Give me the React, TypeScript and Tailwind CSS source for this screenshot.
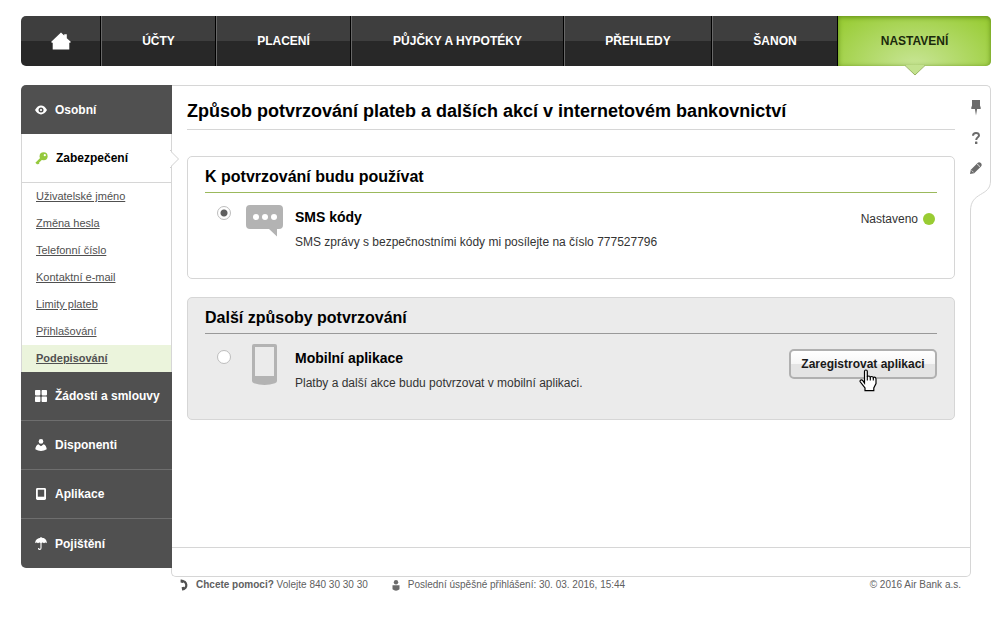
import type { ReactNode } from "react";

const NAV_ITEMS = ["Účty", "Placení", "Půjčky a hypotéky", "Přehledy", "Šanon"];

const SECURITY_LINKS = [
  "Uživatelské jméno",
  "Změna hesla",
  "Telefonní číslo",
  "Kontaktní e-mail",
  "Limity plateb",
  "Přihlašování",
  "Podepisování",
];

const HomeIcon = () => (
  <svg width="20" height="18" viewBox="0 0 20 18" fill="white">
    <path d="M10 .5 13.2 3.6V2.2h2.6v4L20 10l-1 .8h-.7V17.500H1.700V10.800H1L0 10z" />
  </svg>
);

const EyeIcon = () => (
  <svg width="12" height="12" viewBox="0 0 12 12">
    <path d="M0 6Q2.600 1.600 6 1.600T12 6Q9.400 10.400 6 10.400T0 6Z" fill="white" />
    <circle cx="6" cy="6" r="2.500" fill="#505050" />
    <circle cx="6" cy="6" r="1.100" fill="white" />
  </svg>
);

const KeyIcon = () => (
  <svg width="13" height="13" viewBox="0 0 13 13">
    <path d="M1.300 11.700 6.800 6.200" stroke="#95c93d" strokeWidth="2.600" />
    <path d="M2.600 10.400 4 11.800" stroke="#95c93d" strokeWidth="1.300" />
    <circle cx="8.600" cy="4.300" r="4" fill="#95c93d" />
    <circle cx="9.800" cy="3.200" r="1.100" fill="white" />
  </svg>
);

const GridIcon = () => (
  <svg width="12" height="12" viewBox="0 0 12 12" fill="white">
    <rect width="5.400" height="5.400" rx=".8" />
    <rect x="6.600" width="5.400" height="5.400" rx=".8" />
    <rect y="6.600" width="5.400" height="5.400" rx=".8" />
    <rect x="6.600" y="6.600" width="5.400" height="5.400" rx=".8" />
  </svg>
);

const PersonIcon = () => (
  <svg width="12" height="12" viewBox="0 0 12 12" fill="white">
    <circle cx="6" cy="2.400" r="2.300" />
    <path d="M3.300 5.200 6 7.200 8.700 5.200Q11.500 6.600 11.700 10.300 9 12 6 12T.3 10.300Q.5 6.600 3.300 5.200Z" />
  </svg>
);

const DeviceIcon = () => (
  <svg width="12" height="12" viewBox="0 0 12 12">
    <rect x="1" width="10" height="12" rx="1.400" fill="white" />
    <rect x="2.800" y="1.700" width="6.400" height="7" fill="#505050" />
  </svg>
);

const UmbrellaIcon = () => (
  <svg width="12" height="13" viewBox="0 0 12 13">
    <path d="M0 6.200Q.6 1 6 .8T12 6.200Q10.500 4.900 9 6.200 7.500 4.900 6 6.200 4.500 4.900 3 6.200 1.500 4.900 0 6.200Z" fill="white" />
    <path d="M6 0v11q0 1.400-1.300 1.400T3.600 11" fill="none" stroke="white" strokeWidth="1.100" />
  </svg>
);

const PinIcon = () => (
  <svg width="10" height="16" viewBox="0 0 10 16" fill="#6b6b6b">
    <path d="M1 0h8v5.500L9.700 7.500v1.400H6.100L5 15.500 3.900 8.900H.3V7.500L1 5.500z" />
  </svg>
);

const HelpIcon = () => (
  <svg width="10" height="12" viewBox="0 0 10 12">
    <path d="M2 3.700Q2.100 1.100 5 1.100T8 3.500C8 5.400 5.200 5.300 5.200 8" fill="none" stroke="#6b6b6b" strokeWidth="2" />
    <rect x="4" y="9.600" width="2.400" height="2.400" rx=".5" fill="#6b6b6b" />
  </svg>
);

const PencilIcon = () => (
  <svg width="12" height="12" viewBox="0 0 12 12">
    <path d="M0 12 .8 7.800 7.600 1Q9-.3 10.900 1.100 12.400 2.900 11 4.400L4.200 11.200z" fill="#6b6b6b" />
    <path d="M7 2.400Q9.200 2.600 9.600 5M1.600 8.400 3.600 10.400" fill="none" stroke="white" strokeWidth=".7" />
  </svg>
);

const SmsIcon = () => (
  <svg width="38" height="32" viewBox="0 0 38 32">
    <path d="M4 0H33Q37 0 37 4V20Q37 24 33 24H31V31.500L23 24H4Q0 24 0 20V4Q0 0 4 0Z" fill="#b3b3b3" />
    <circle cx="10" cy="12" r="3" fill="white" />
    <circle cx="19" cy="12" r="3" fill="white" />
    <circle cx="28" cy="12" r="3" fill="white" />
  </svg>
);

const PhoneIcon = () => (
  <svg width="26" height="41" viewBox="0 0 26 41">
    <path d="M2 0H23Q25 0 25 2V37Q25 38.500 23 39.200 18 41 12.500 41T2 39.200Q0 38.500 0 37V2Q0 0 2 0Z" fill="#b3b3b3" />
    <rect x="3" y="3" width="19" height="29" fill="#ebebeb" />
  </svg>
);

const HandsetIcon = () => (
  <svg width="8" height="12" viewBox="0 0 8 12">
    <path d="M1 1.800C7.800 2 7.800 9.800 2.600 10.200" fill="none" stroke="#505050" strokeWidth="2.200" />
    <path d="M.6.400 3.600 1 3 4 .6 3.400zM1.600 8.200 4 7.800 4.600 11 2.200 11.600z" fill="#505050" />
  </svg>
);

const UserIcon = () => (
  <svg width="8" height="11" viewBox="0 0 8 11" fill="#6b6b6b">
    <circle cx="4" cy="2.300" r="2.200" />
    <path d="M.5 5.200H7.500V9.300Q6 10.700 4 10.700T.5 9.300Z" />
  </svg>
);

const HandCursor = () => (
  <svg className="pointer-events-none absolute left-[70px] top-[20px]" width="18" height="23" viewBox="0 0 18 23">
    <path
      d="M5.500 14V2.500q0-1.500 1.400-1.500T8.300 2.500V8q.3-1 1.500-1t1.500 1.300q.3-.8 1.500-.8t1.500 1.300q.3-.6 1.300-.6T17 9.800V14.500L14.800 19V21.700H6V19L1.200 12.800Q.7 11.500 1.800 11t2.200.8z"
      fill="white"
      stroke="black"
      strokeWidth="1.200"
    />
    <path d="M8.300 7.500v4M11.300 8.500v3M14.300 9v2.500" stroke="black" strokeWidth="1.100" />
  </svg>
);

function SideItem({ icon, label, last }: { icon: ReactNode; label: string; last?: boolean }) {
  return (
    <a
      href="#"
      className={`flex h-[49px] items-center gap-2 bg-[#505050] pl-[14px] text-[12px] font-bold text-white ${
        last ? "" : "border-b border-[#6e6e6e]"
      }`}
    >
      {icon}
      {label}
    </a>
  );
}

type MethodProps = {
  id: string;
  heading: string;
  title: string;
  text: string;
  icon: ReactNode;
  action: ReactNode;
  active?: boolean;
};

function Method({ id, heading, title, text, icon, action, active }: MethodProps) {
  return (
    <section
      className={`min-h-[123px] rounded-[5px] border border-[#d6d6d6] px-[17px] ${active ? "bg-white" : "bg-[#ebebeb]"}`}
    >
      <h2
        className={`border-b pb-[5px] pt-[10px] text-[16px] leading-[20px] font-bold ${
          active ? "border-[#9bb95c]" : "border-[#999999]"
        }`}
      >
        {heading}
      </h2>
      <div className="flex">
        <input
          id={id}
          type="radio"
          name="method"
          defaultChecked={active}
          className={`ml-3 size-[14px] shrink-0 appearance-none rounded-full border border-[#bdbdbd] bg-white checked:bg-[radial-gradient(circle,#606060_3px,white_4px)] ${
            active ? "mt-[13px]" : "mt-4"
          }`}
        />
        <span className={`ml-[13px] flex w-[43px] shrink-0 justify-center pr-[2px] ${active ? "mt-3" : "mt-[10px]"}`}>
          {icon}
        </span>
        <div className="mt-[15px] ml-2 grow">
          <label htmlFor={id} className="block text-[14px] leading-[18px] font-bold">
            {title}
          </label>
          <p className="mt-2 text-[12px] leading-[16px] text-[#333333]">{text}</p>
        </div>
        {action}
      </div>
    </section>
  );
}

export default function App() {
  return (
    <div className="bg-white px-4 pt-4 pl-[21px] font-['Liberation_Sans',Arial,sans-serif] text-black">
      {/* Main navigation */}
      <nav className="grid h-[50px] grid-cols-[80fr_115fr_135fr_213fr_148fr_126fr_153fr] text-[12px] font-bold uppercase text-white">
        <a
          href="#"
          aria-label="Domů"
          className="flex items-center justify-center rounded-l-[5px] border-r border-black bg-[linear-gradient(#3e3e3e_50%,#282828_50%)]"
        >
          <HomeIcon />
        </a>
        {NAV_ITEMS.map((item) => (
          <a
            key={item}
            href="#"
            className="flex items-center justify-center border-r border-l border-r-black border-l-[#686868] bg-[linear-gradient(#3e3e3e_50%,#282828_50%)]"
          >
            {item}
          </a>
        ))}
        <a
          href="#"
          className="relative flex items-center justify-center rounded-r-[5px] bg-[radial-gradient(ellipse_at_bottom,#c8e596_0%,#9acd38_90%)] text-[#1b2a0c] shadow-[inset_0_1px_5px_#5f8a14]"
        >
          Nastavení
          <svg className="absolute top-[49px] left-1/2 -translate-x-1/2" width="20" height="11" viewBox="0 0 20 11">
            <path d="M0 0H20L10 10Z" fill="#c3e28e" />
            <path d="M0 .5 10 10 20 .5" fill="none" stroke="#96b35e" />
          </svg>
        </a>
      </nav>

      <div className="mt-[19px] flex">
        {/* Sidebar */}
        <aside className="relative z-10 w-[151px] shrink-0 self-start">
          <div className="overflow-hidden rounded-tl-[5px]">
            <SideItem icon={<EyeIcon />} label="Osobní" last />
          </div>
          <div className="border-x border-[#d6d6d6] bg-white">
            <a
              href="#"
              className="relative flex h-[49px] items-center gap-2 border-b border-[#d6d6d6] pl-[13px] text-[12px] font-bold"
            >
              <KeyIcon />
              Zabezpečení
              <svg className="absolute top-4 -right-[9px]" width="10" height="18" viewBox="0 0 10 18">
                <path d="M.5 0V1L8.500 9 .5 17V18" fill="white" stroke="#d0d0d0" />
                <path d="M0 1V17" stroke="white" strokeWidth="2" />
              </svg>
            </a>
            <ul>
              {SECURITY_LINKS.map((link) => {
                const current = link === "Podepisování";
                return (
                  <li key={link} className={`flex h-[27px] items-center pl-[14px] ${current ? "bg-[#ebf4dc]" : ""}`}>
                    <a href="#" className={`text-[11px] text-[#505050] underline ${current ? "font-bold" : ""}`}>
                      {link}
                    </a>
                  </li>
                );
              })}
            </ul>
          </div>
          <div className="overflow-hidden rounded-bl-[5px]">
            <SideItem icon={<GridIcon />} label="Žádosti a smlouvy" />
            <SideItem icon={<PersonIcon />} label="Disponenti" />
            <SideItem icon={<DeviceIcon />} label="Aplikace" />
            <SideItem icon={<UmbrellaIcon />} label="Pojištění" last />
          </div>
        </aside>

        <main className="flex min-w-0 grow flex-col">
          <div className="min-h-[462px] grow border-t border-[#d6d6d6] pl-[15px]">
            <h1 className="border-b border-[#d6d6d6] pt-[14px] pb-[7px] text-[18px] leading-[22px] font-bold">
              Způsob potvrzování plateb a dalších akcí v internetovém bankovnictví
            </h1>
            <div className="mt-[26px] flex flex-col gap-[18px]">
              <Method
                id="sms"
                heading="K potvrzování budu používat"
                title="SMS kódy"
                text="SMS zprávy s bezpečnostními kódy mi posílejte na číslo 777527796"
                icon={<SmsIcon />}
                active
                action={
                  <span className="mt-[18px] flex items-center gap-[5px] self-start text-[12px] leading-[16px] text-[#333333]">
                    Nastaveno
                    <span className="mr-[2px] size-3 rounded-full bg-[#99cc33]" />
                  </span>
                }
              />
              <Method
                id="app"
                heading="Další způsoby potvrzování"
                title="Mobilní aplikace"
                text="Platby a další akce budu potvrzovat v mobilní aplikaci."
                icon={<PhoneIcon />}
                action={
                  <div className="relative mt-[15px] self-start">
                    <button
                      type="button"
                      className="h-[30px] w-[148px] rounded-[5px] border-2 border-[#b0b0b0] bg-[linear-gradient(#ffffff,#f6f6f6_50%,#e4e4e4_50%,#e4e4e4)] text-[12px] font-bold whitespace-nowrap text-[#1a1a1a]"
                    >
                      Zaregistrovat aplikaci
                    </button>
                    <HandCursor />
                  </div>
                }
              />
            </div>
          </div>
          <div className="-ml-px h-[30px] rounded-bl-[5px] border-y border-l border-[#d6d6d6]" />
        </main>

        {/* Page tools */}
        <div className="flex w-9 shrink-0 flex-col">
          <div className="flex h-[96px] flex-col items-center gap-[14px] rounded-tr-[5px] border-t border-r border-[#d6d6d6] pt-[14px] pl-[7px]">
            <button type="button" aria-label="Připnout" className="flex size-4 items-center justify-center">
              <PinIcon />
            </button>
            <button type="button" aria-label="Nápověda" className="flex size-4 items-center justify-center">
              <HelpIcon />
            </button>
            <button type="button" aria-label="Upravit" className="flex size-4 items-center justify-center">
              <PencilIcon />
            </button>
          </div>
          <svg width="36" height="30" viewBox="0 0 36 30" fill="none" stroke="#d6d6d6">
            <path d="M35.500 0C35.500 16 15.500 10 15.500 30" />
          </svg>
          <div className="mr-5 grow border-r border-[#d6d6d6]" />
          <div className="mr-5 h-[30px] rounded-br-[5px] border-y border-r border-[#d6d6d6]" />
        </div>
      </div>

      <footer className="flex items-center pr-[30px] pl-[159px] text-[10px] leading-[16px] text-[#606060]">
        <HandsetIcon />
        <span className="ml-2">
          <b>Chcete pomoci?</b> Volejte 840 30 30 30
        </span>
        <span className="ml-6 flex items-center gap-2">
          <UserIcon />
          Poslední úspěšné přihlášení: 30. 03. 2016, 15:44
        </span>
        <span className="ml-auto">© 2016 Air Bank a.s.</span>
      </footer>
    </div>
  );
}
